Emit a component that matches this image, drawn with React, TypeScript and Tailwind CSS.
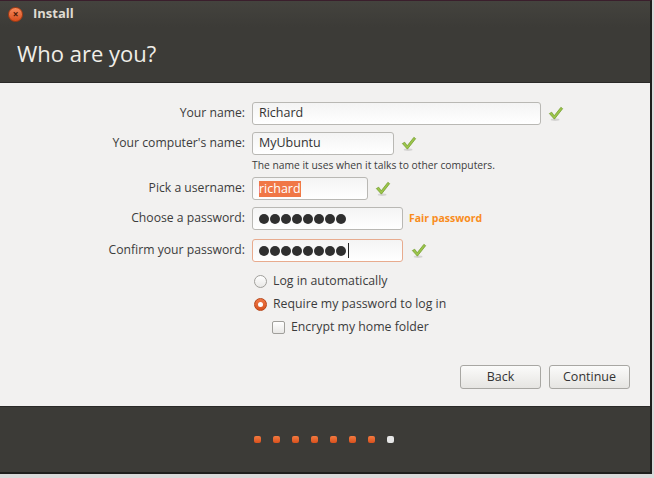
import React from 'react';

const Check: React.FC = () => (
  <svg width="16" height="18" viewBox="0 0 18 18" className="shrink-0">
    <ellipse cx="8" cy="15.5" rx="5" ry="1.3" fill="#000" opacity="0.12" />
    <path
      d="M1.5 8.5 L4.2 7 L7 11 L14.5 1.5 L16.5 3 L7.2 14.8 Z"
      fill="#9cc54a"
      stroke="#6f9a2a"
      strokeWidth="0.8"
      strokeLinejoin="round"
    />
  </svg>
);

const Dots: React.FC<{ cursor?: boolean }> = ({ cursor }) => (
  <div className="flex items-center gap-[1px]">
    {Array.from({ length: 8 }).map((_, i) => (
      <span key={i} className="w-[10px] h-[10px] rounded-full bg-[#2f2f2f]" />
    ))}
    {cursor && <span className="w-[1px] h-[15px] bg-[#222] ml-[1px]" />}
  </div>
);

const Field: React.FC<{ orange?: boolean; children: React.ReactNode; w: string }> = ({
  orange,
  children,
  w,
}) => (
  <div
    className={`${w} h-[23px] rounded-[3px] border bg-gradient-to-b from-[#f4f4f4] to-white flex items-center px-[6px] text-[12.5px] text-[#333] ${
      orange ? 'border-[#e8ab8e]' : 'border-[#b9b8b4]'
    }`}
  >
    {children}
  </div>
);

const Label: React.FC<{ children: React.ReactNode }> = ({ children }) => (
  <div className="w-[245px] text-right text-[12.2px] text-[#3c3c3c] shrink-0">{children}</div>
);

export default function App() {
  return (
    <div
      className="w-[654px] h-[478px] bg-[#d9d9d9] overflow-hidden"
      style={{ fontFamily: '"Open Sans", "DejaVu Sans", sans-serif' }}
    >
      <div className="w-[652px] h-[474px] flex flex-col border-r-2 border-b-2 border-[#1e1e1c] border-t border-t-[#3a1e2c] bg-[#3c3b37]">
        {/* title bar */}
        <div className="h-[26px] flex items-center pl-[8px] bg-gradient-to-b from-[#44433e] to-[#3c3b37]">
          <div className="w-[15px] h-[15px] rounded-full bg-gradient-to-b from-[#f58a5b] to-[#d94d1a] border border-[#a73b12] flex items-center justify-center text-[10px] leading-none font-bold text-[#4a1a08]">
            ×
          </div>
          <span className="ml-[10px] text-[13px] font-bold text-[#dfdbd2]">Install</span>
        </div>
        {/* header */}
        <div className="h-[56px] flex items-center pl-[17px] pb-[2px] border-b border-[#2a2927]">
          <span className="text-[22px] text-[#f0eee8]">Who are you?</span>
        </div>

        {/* content */}
        <div className="flex-1 bg-[#f2f1f0] flex flex-col pt-[19px]">
          <div className="flex items-center gap-[7px]">
            <Label>Your name:</Label>
            <Field w="w-[289px]">Richard</Field>
            <Check />
          </div>
          <div className="flex items-center gap-[7px] mt-[7px]">
            <Label>Your computer's name:</Label>
            <Field w="w-[142px]">MyUbuntu</Field>
            <Check />
          </div>
          <div className="pl-[252px] mt-[2px] text-[10.3px] text-[#3c3c3c] leading-[16px]">
            The name it uses when it talks to other computers.
          </div>
          <div className="flex items-center gap-[7px] mt-[4px]">
            <Label>Pick a username:</Label>
            <Field w="w-[116px]">
              <span className="bg-[#f07746] text-white leading-[16px]">richard</span>
            </Field>
            <Check />
          </div>
          <div className="flex items-center gap-[7px] mt-[7px]">
            <Label>Choose a password:</Label>
            <Field w="w-[151px]">
              <Dots />
            </Field>
            <span className="text-[10.5px] font-bold text-[#f98c1c] -ml-[1px]">Fair password</span>
          </div>
          <div className="flex items-center gap-[7px] mt-[9px]">
            <Label>Confirm your password:</Label>
            <Field w="w-[151px]" orange>
              <Dots cursor />
            </Field>
            <span className="ml-[1px]">
              <Check />
            </span>
          </div>

          <div className="pl-[254px] mt-[12px] flex flex-col gap-[9px] text-[12.3px] text-[#3c3c3c]">
            <div className="flex items-center gap-[6px] h-[14px]">
              <span className="w-[13px] h-[13px] rounded-full border border-[#a09f9b] bg-gradient-to-b from-white to-[#e9e8e6]" />
              <span>Log in automatically</span>
            </div>
            <div className="flex items-center gap-[6px] h-[14px]">
              <span className="w-[13px] h-[13px] rounded-full border border-[#b8471a] bg-gradient-to-b from-[#f07745] to-[#d8531f] flex items-center justify-center">
                <span className="w-[5px] h-[5px] rounded-full bg-white" />
              </span>
              <span>Require my password to log in</span>
            </div>
            <div className="flex items-center gap-[6px] h-[14px] pl-[18px]">
              <span className="w-[13px] h-[13px] rounded-[2px] border border-[#a09f9b] bg-gradient-to-b from-white to-[#e9e8e6]" />
              <span>Encrypt my home folder</span>
            </div>
          </div>

          <div className="flex-1" />
          <div className="flex justify-end gap-[8px] pr-[20px] pb-[17px]">
            <button className="w-[81px] h-[24px] rounded-[3px] border border-[#a8a7a3] bg-gradient-to-b from-[#fbfbfa] to-[#e6e5e2] text-[12.5px] text-[#333]">
              Back
            </button>
            <button className="w-[81px] h-[24px] rounded-[3px] border border-[#a8a7a3] bg-gradient-to-b from-[#fbfbfa] to-[#e6e5e2] text-[12.5px] text-[#333]">
              Continue
            </button>
          </div>
        </div>

        {/* footer */}
        <div className="h-[66px] flex items-center justify-center gap-[12px] border-t border-[#2a2927] pr-[2px]">
          {Array.from({ length: 7 }).map((_, i) => (
            <span key={i} className="w-[7px] h-[7px] rounded-[2px] bg-gradient-to-b from-[#f47a3f] to-[#d9501c]" />
          ))}
          <span className="w-[7px] h-[7px] rounded-[2px] bg-[#e6e6e6]" />
        </div>
      </div>
    </div>
  );
}
